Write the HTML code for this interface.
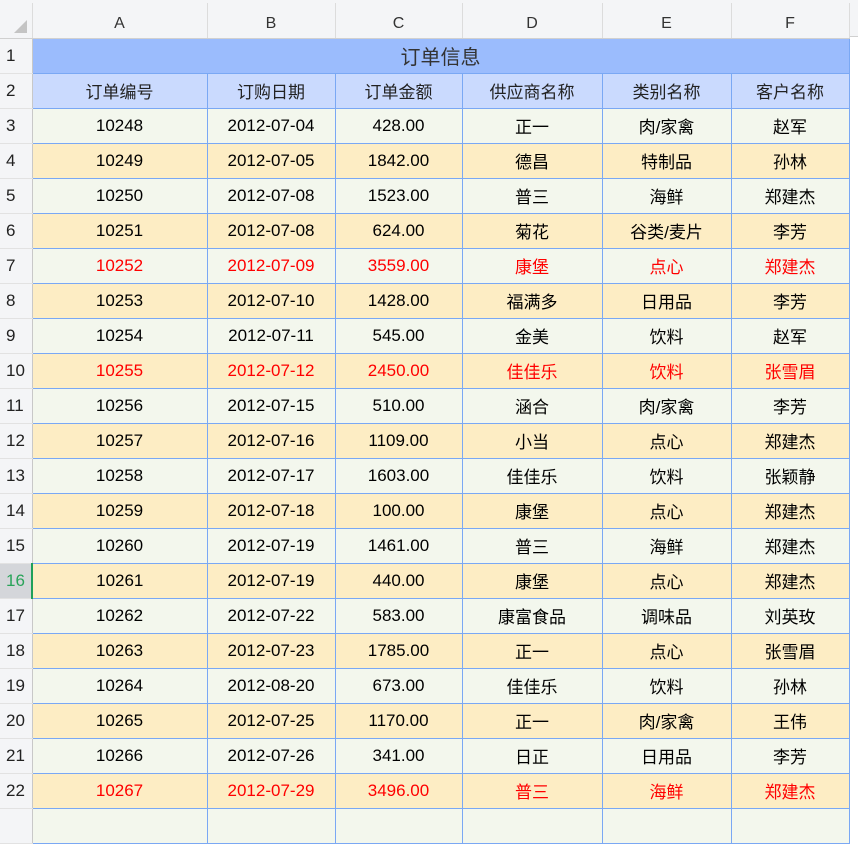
<!DOCTYPE html>
<html><head><meta charset="utf-8"><style>
*{margin:0;padding:0;box-sizing:border-box}
body{width:858px;height:814px;overflow:hidden;background:#fff;font-family:"Liberation Sans","Microsoft YaHei","Noto Sans CJK SC",sans-serif;position:relative}
.top{position:absolute;left:0;top:0;width:858px;height:37px;background:#f4f5f7;border-bottom:1px solid #d0d0d0}
table{position:absolute;left:0;top:3px;border-collapse:collapse;table-layout:fixed}
td{height:35px;text-align:center;font-size:17px;color:#000;border:1px solid #7aa8f4;padding:0;white-space:nowrap;overflow:hidden}
tr.ch td{height:35px;background:#f4f5f7;border:none;border-right:1px solid #dcdcdc;border-bottom:1px solid #d0d0d0;color:#333;font-size:16px;padding-top:8px}
td.rh{background:#f4f5f7;border:none;border-right:1px solid #c8c8c8;border-bottom:1px solid #e2e2e2;text-align:left;padding-left:6px;color:#222;font-size:17px}
tr.t td.c{background:#9bbcfd;font-size:20px;color:#333}
tr.h td.c{background:#cadafe;color:#222}
tr.o td.c{background:#f3f7ed}
tr.e td.c{background:#fdedc4}
tr.r td.c{color:#f00}
td.sel{background:#d4d6da!important;color:#2aa35a!important;border-right:2px solid #1fa05a!important}
</style></head><body>
<div class="top"></div>
<table>
<colgroup><col style="width:32px"><col style="width:175px"><col style="width:128px"><col style="width:127px"><col style="width:140px"><col style="width:129px"><col style="width:118px"></colgroup>
<tr class="ch"><td style="position:relative"><div style="position:absolute;right:5px;bottom:5px;width:0;height:0;border-left:13px solid transparent;border-bottom:13px solid #c4c4c4"></div></td><td>A</td><td>B</td><td>C</td><td>D</td><td>E</td><td>F</td></tr>
<tr class="t"><td class="rh">1</td><td class="c" colspan="6">订单信息</td></tr>
<tr class="h"><td class="rh">2</td><td class="c">订单编号</td><td class="c">订购日期</td><td class="c">订单金额</td><td class="c">供应商名称</td><td class="c">类别名称</td><td class="c">客户名称</td></tr>
<tr class="o"><td class="rh">3</td><td class="c">10248</td><td class="c">2012-07-04</td><td class="c">428.00</td><td class="c">正一</td><td class="c">肉/家禽</td><td class="c">赵军</td></tr>
<tr class="e"><td class="rh">4</td><td class="c">10249</td><td class="c">2012-07-05</td><td class="c">1842.00</td><td class="c">德昌</td><td class="c">特制品</td><td class="c">孙林</td></tr>
<tr class="o"><td class="rh">5</td><td class="c">10250</td><td class="c">2012-07-08</td><td class="c">1523.00</td><td class="c">普三</td><td class="c">海鲜</td><td class="c">郑建杰</td></tr>
<tr class="e"><td class="rh">6</td><td class="c">10251</td><td class="c">2012-07-08</td><td class="c">624.00</td><td class="c">菊花</td><td class="c">谷类/麦片</td><td class="c">李芳</td></tr>
<tr class="o r"><td class="rh">7</td><td class="c">10252</td><td class="c">2012-07-09</td><td class="c">3559.00</td><td class="c">康堡</td><td class="c">点心</td><td class="c">郑建杰</td></tr>
<tr class="e"><td class="rh">8</td><td class="c">10253</td><td class="c">2012-07-10</td><td class="c">1428.00</td><td class="c">福满多</td><td class="c">日用品</td><td class="c">李芳</td></tr>
<tr class="o"><td class="rh">9</td><td class="c">10254</td><td class="c">2012-07-11</td><td class="c">545.00</td><td class="c">金美</td><td class="c">饮料</td><td class="c">赵军</td></tr>
<tr class="e r"><td class="rh">10</td><td class="c">10255</td><td class="c">2012-07-12</td><td class="c">2450.00</td><td class="c">佳佳乐</td><td class="c">饮料</td><td class="c">张雪眉</td></tr>
<tr class="o"><td class="rh">11</td><td class="c">10256</td><td class="c">2012-07-15</td><td class="c">510.00</td><td class="c">涵合</td><td class="c">肉/家禽</td><td class="c">李芳</td></tr>
<tr class="e"><td class="rh">12</td><td class="c">10257</td><td class="c">2012-07-16</td><td class="c">1109.00</td><td class="c">小当</td><td class="c">点心</td><td class="c">郑建杰</td></tr>
<tr class="o"><td class="rh">13</td><td class="c">10258</td><td class="c">2012-07-17</td><td class="c">1603.00</td><td class="c">佳佳乐</td><td class="c">饮料</td><td class="c">张颖静</td></tr>
<tr class="e"><td class="rh">14</td><td class="c">10259</td><td class="c">2012-07-18</td><td class="c">100.00</td><td class="c">康堡</td><td class="c">点心</td><td class="c">郑建杰</td></tr>
<tr class="o"><td class="rh">15</td><td class="c">10260</td><td class="c">2012-07-19</td><td class="c">1461.00</td><td class="c">普三</td><td class="c">海鲜</td><td class="c">郑建杰</td></tr>
<tr class="e"><td class="rh sel">16</td><td class="c">10261</td><td class="c">2012-07-19</td><td class="c">440.00</td><td class="c">康堡</td><td class="c">点心</td><td class="c">郑建杰</td></tr>
<tr class="o"><td class="rh">17</td><td class="c">10262</td><td class="c">2012-07-22</td><td class="c">583.00</td><td class="c">康富食品</td><td class="c">调味品</td><td class="c">刘英玫</td></tr>
<tr class="e"><td class="rh">18</td><td class="c">10263</td><td class="c">2012-07-23</td><td class="c">1785.00</td><td class="c">正一</td><td class="c">点心</td><td class="c">张雪眉</td></tr>
<tr class="o"><td class="rh">19</td><td class="c">10264</td><td class="c">2012-08-20</td><td class="c">673.00</td><td class="c">佳佳乐</td><td class="c">饮料</td><td class="c">孙林</td></tr>
<tr class="e"><td class="rh">20</td><td class="c">10265</td><td class="c">2012-07-25</td><td class="c">1170.00</td><td class="c">正一</td><td class="c">肉/家禽</td><td class="c">王伟</td></tr>
<tr class="o"><td class="rh">21</td><td class="c">10266</td><td class="c">2012-07-26</td><td class="c">341.00</td><td class="c">日正</td><td class="c">日用品</td><td class="c">李芳</td></tr>
<tr class="e r"><td class="rh">22</td><td class="c">10267</td><td class="c">2012-07-29</td><td class="c">3496.00</td><td class="c">普三</td><td class="c">海鲜</td><td class="c">郑建杰</td></tr>
<tr class="o"><td class="rh"></td><td class="c"></td><td class="c"></td><td class="c"></td><td class="c"></td><td class="c"></td><td class="c"></td></tr>
</table>
</body></html>
